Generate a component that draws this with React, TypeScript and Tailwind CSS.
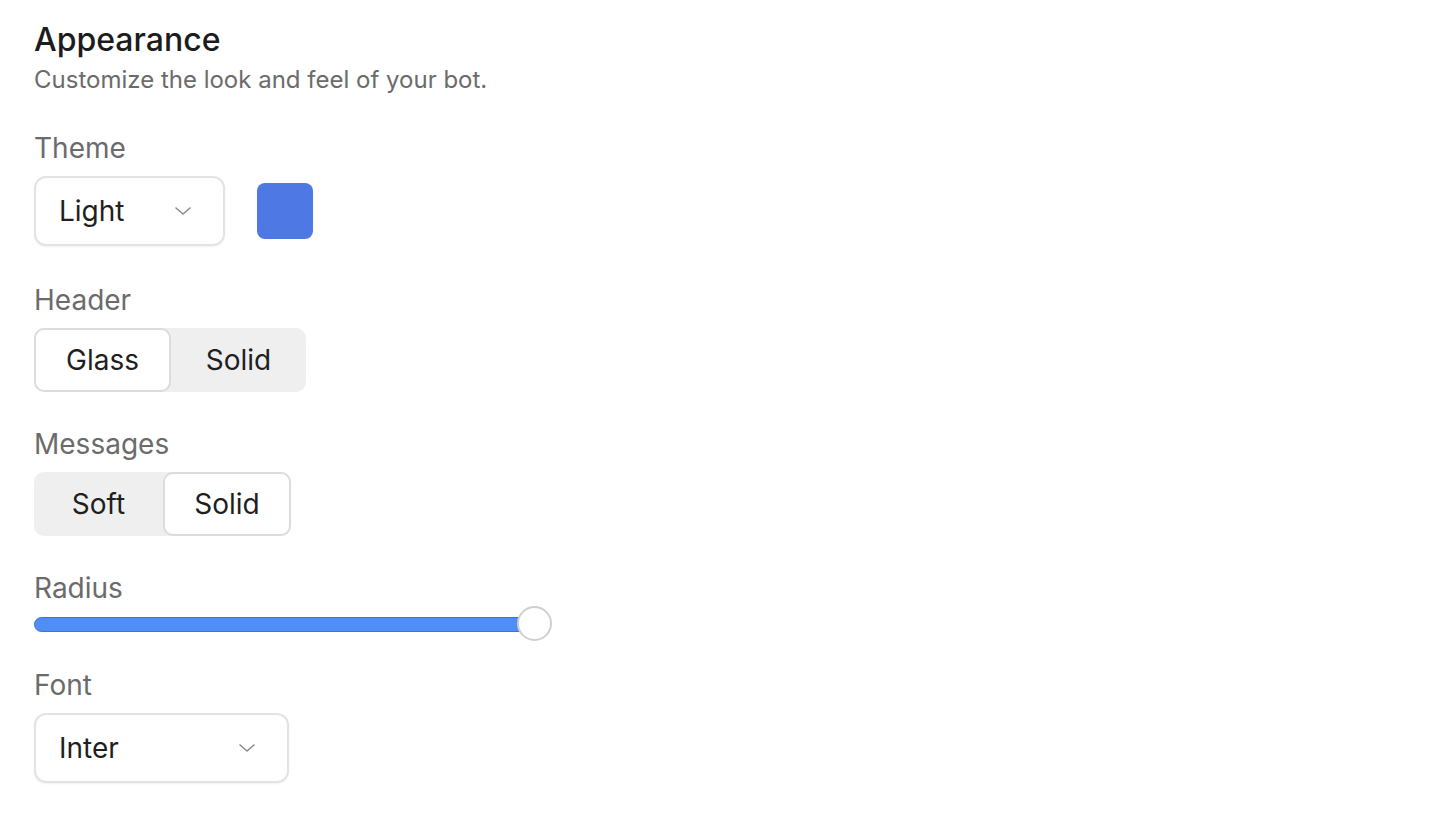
import { useState } from 'react'

function Chevron() {
  return (
    <svg width="20" height="20" viewBox="0 0 20 20" fill="none" stroke="#8a8a8a" strokeWidth="1.6" strokeLinecap="round" strokeLinejoin="round">
      <path d="M3 7l7 6 7-6" />
    </svg>
  )
}

function Label({ children, tight }: { children: React.ReactNode; tight?: boolean }) {
  return (
    <div className={`text-[28px] leading-[34px] text-[#6b6b6b] ${tight ? 'mb-[1px]' : 'mb-[11px]'}`}>{children}</div>
  )
}

function Segmented({ options, value, onChange, widths }: { options: string[]; value: string; onChange: (v: string) => void; widths: string[] }) {
  return (
    <div className="flex h-[64px] rounded-[10px] bg-[#efefef] w-fit">
      {options.map((o, i) => (
        <button
          key={o}
          onClick={() => onChange(o)}
          className={`${widths[i]} h-full rounded-[10px] text-[28px] text-[#1f1f1f] ${
            value === o ? 'bg-white border-2 border-[#dcdcdc]' : 'border-2 border-transparent'
          }`}
        >
          {o}
        </button>
      ))}
    </div>
  )
}

export default function App() {
  const [header, setHeader] = useState('Glass')
  const [messages, setMessages] = useState('Solid')

  return (
    <div className="min-h-screen bg-white font-['Inter',sans-serif] pl-[34px] pt-[20px]">
      <h1 className="text-[32px] leading-[40px] text-[#1c1c1c] font-medium">Appearance</h1>
      <p className="mt-[4px] text-[24px] leading-[32px] text-[#6b6b6b]">Customize the look and feel of your bot.</p>

      <div className="mt-[35px]">
        <Label>Theme</Label>
        <div className="flex items-center gap-[32px]">
          <div className="w-[191px] h-[70px] rounded-[12px] border-2 border-[#e3e3e3] shadow-[0_1px_2px_rgba(0,0,0,0.06)] flex items-center justify-between pl-[23px] pr-[30px]">
            <span className="text-[28px] text-[#1f1f1f]">Light</span>
            <Chevron />
          </div>
          <div className="w-[56px] h-[56px] rounded-[8px] bg-[#4e78e3]" />
        </div>
      </div>

      <div className="mt-[37px]">
        <Label>Header</Label>
        <Segmented options={['Glass', 'Solid']} value={header} onChange={setHeader} widths={['w-[137px]', 'w-[135px]']} />
      </div>

      <div className="mt-[35px]">
        <Label>Messages</Label>
        <Segmented options={['Soft', 'Solid']} value={messages} onChange={setMessages} widths={['w-[129px]', 'w-[128px]']} />
      </div>

      <div className="mt-[35px]">
        <Label tight>Radius</Label>
        <div className="relative w-[518px] h-[36px] flex items-center">
          <div className="w-[500px] h-[15px] rounded-full bg-[#4f8ef5] border border-[#3d74d6]" />
          <div className="absolute left-[483px] top-0 w-[35px] h-[35px] rounded-full bg-white border-2 border-[#cfcfcf]" />
        </div>
      </div>

      <div className="mt-[26px]">
        <Label>Font</Label>
        <div className="w-[255px] h-[70px] rounded-[12px] border-2 border-[#e3e3e3] shadow-[0_1px_2px_rgba(0,0,0,0.06)] flex items-center justify-between pl-[23px] pr-[30px]">
          <span className="text-[28px] text-[#1f1f1f]">Inter</span>
          <Chevron />
        </div>
      </div>
    </div>
  )
}
